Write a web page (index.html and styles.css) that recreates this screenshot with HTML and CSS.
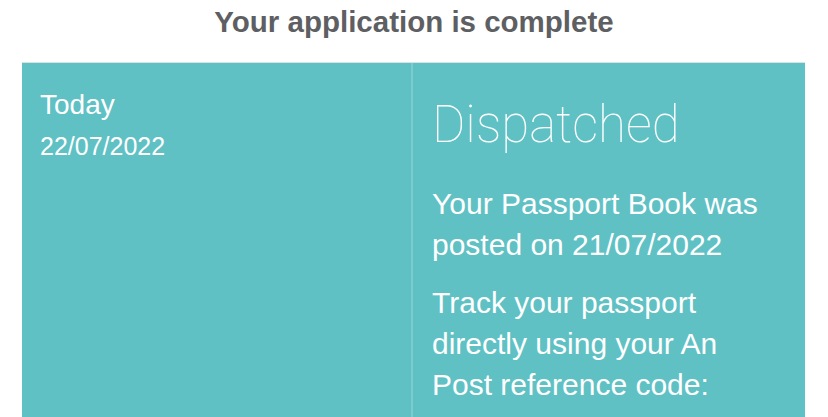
FILE: index.html
```html
<!DOCTYPE html>
<html lang="en">
<head>
  <meta charset="UTF-8" />
  <meta name="viewport" content="width=device-width, initial-scale=1.0"/>
  <title>Application status</title>
  <link rel="stylesheet" href="styles.css">
</head>
<body>
  <header class="page-head">
    <h1>Your application is complete</h1>
  </header>

  <section class="status-card">
    <div class="status-date">
      <div class="day">Today</div>
      <div class="date">22/07/2022</div>
    </div>

    <div class="status-info">
      <h2>Dispatched</h2>
      <p>Your Passport Book was posted on 21/07/2022</p>
      <p>Track your passport directly using your An Post reference code: <span class="code">WK123456789IE</span></p>
    </div>
  </section>
</body>
</html>
```

FILE: styles.css
```css
* {
  box-sizing: border-box;
}

body {
  margin: 0;
  background: #ffffff;
  font-family: 'Liberation Sans', Arial, sans-serif;
  color: #ffffff;
  overflow: hidden;
}

.page-head {
  padding-top: 4px;
  text-align: center;
}

.page-head h1 {
  margin: 0;
  font-size: 29.5px;
  line-height: 35px;
  font-weight: bold;
  color: #5e5f63;
}

.status-card {
  display: grid;
  grid-template-columns: 389px 1fr;
  margin: 23px 23px 0 22px;
  border-top: 1px solid #d9e2e4;
  background: #5fc1c4;
  min-height: 400px;
}

.status-date {
  padding: 25px 18px 0 18px;
}

.day {
  font-size: 28px;
  line-height: 34px;
}

.date {
  margin-top: 9px;
  font-size: 25px;
  line-height: 30px;
}

.status-info {
  border-left: 2px solid rgba(255, 255, 255, 0.18);
  padding: 32px 30px 0 19px;
}

.status-info h2 {
  margin: 0 0 28px;
  font-family: 'Roboto', 'Lato', sans-serif;
  font-weight: 100;
  font-size: 51px;
  line-height: 60px;
}

.status-info p {
  margin: 0 0 17px;
  font-size: 30px;
  line-height: 41px;
}

.code {
  display: block;
  margin-top: 5px;
  font-weight: bold;
}
```
